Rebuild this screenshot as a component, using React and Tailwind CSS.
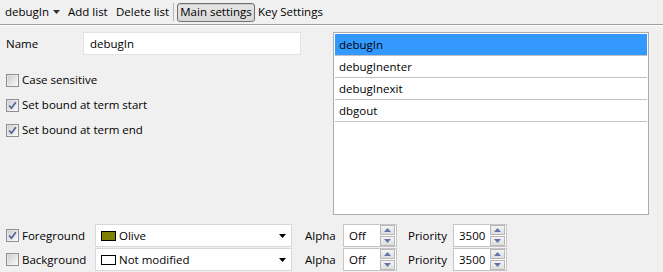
import React from "react";

const font = { fontFamily: '"Open Sans", "Liberation Sans", Arial, sans-serif' };

function Check({ checked }) {
  return (
    <div className="w-[13px] h-[13px] border border-[#8e8f8f] bg-gradient-to-br from-[#dcdcdc] to-[#fbfbfb] flex items-center justify-center shrink-0">
      <div className="w-[9px] h-[9px] bg-gradient-to-br from-[#cfcfcf] to-[#f6f6f6] flex items-center justify-center">
        {checked && (
          <svg width="9" height="9" viewBox="0 0 9 9">
            <path d="M1.2 4.6 L3.4 7.2 L7.8 1.2" fill="none" stroke="#4a5f97" strokeWidth="1.6" />
          </svg>
        )}
      </div>
    </div>
  );
}

function CheckRow({ checked, label, className = "" }) {
  return (
    <div className={"flex items-center gap-[3px] h-[16px] " + className}>
      <Check checked={checked} />
      <span className="text-[11.5px] text-black leading-none whitespace-nowrap">{label}</span>
    </div>
  );
}

function SpinBtn({ up }) {
  return (
    <div className="w-[15px] h-[10px] border border-[#b6b6b6] bg-gradient-to-b from-[#f4f4f4] to-[#dedede] flex items-center justify-center">
      <svg width="7" height="4" viewBox="0 0 7 4">
        {up ? (
          <path d="M0 4 L3.5 0 L7 4 Z" fill="#6475a8" />
        ) : (
          <path d="M0 0 L3.5 4 L7 0 Z" fill="#6475a8" />
        )}
      </svg>
    </div>
  );
}

function Spin({ value }) {
  return (
    <div className="w-[54px] h-[23px] border border-[#c6c6c6] bg-white flex items-center pl-[5px] pr-[1px]">
      <span className="flex-1 text-[11.5px] text-black">{value}</span>
      <div className="flex flex-col gap-[1px]">
        <SpinBtn up />
        <SpinBtn />
      </div>
    </div>
  );
}

function Combo({ swatch, label }) {
  return (
    <div className="w-[197px] h-[23px] border border-[#d9d9d9] bg-white flex items-center pl-[5px] pr-[5px]">
      <div className={"w-[15px] h-[10px] border border-black mr-[3px] " + swatch} />
      <span className="flex-1 text-[11.5px] text-black">{label}</span>
      <svg width="7" height="4" viewBox="0 0 7 4">
        <path d="M0 0 L7 0 L3.5 4 Z" fill="#000" />
      </svg>
    </div>
  );
}

function BottomRow({ checked, label, swatch, color, className = "" }) {
  return (
    <div className={"flex items-center h-[23px] " + className}>
      <div className="w-[95px] pl-[6px]">
        <CheckRow checked={checked} label={label} />
      </div>
      <Combo swatch={swatch} label={color} />
      <span className="text-[11.5px] text-black ml-[13px] w-[38px]">Alpha</span>
      <Spin value="Off" />
      <span className="text-[11.5px] text-black ml-[11px] w-[45px]">Priority</span>
      <Spin value="3500" />
    </div>
  );
}

export default function App() {
  const items = ["debugIn", "debugInenter", "debugInexit", "dbgout"];
  return (
    <div className="w-[663px] h-[272px] bg-[#f0f0f0] text-black overflow-hidden" style={font}>
      <div className="h-[25px] border-b border-[#a0a0a0] flex items-center text-[11.5px] whitespace-nowrap">
        <span className="ml-[5px] w-[48px] shrink-0">debugIn</span>
        <svg className="shrink-0" width="7" height="4" viewBox="0 0 7 4">
          <path d="M0 0 L7 0 L3.5 4 Z" fill="#333" />
        </svg>
        <span className="ml-[8px] w-[48px] shrink-0">Add list</span>
        <span className="w-[57px] shrink-0">Delete list</span>
        <div className="w-px h-[18px] bg-[#b5b5b5] shrink-0" />
        <div className="ml-[3px] h-[19px] w-[78px] shrink-0 border border-[#707070] rounded-[3px] bg-gradient-to-b from-[#e6e6e6] to-[#d8d8d8] flex items-center justify-center shadow-[inset_0_1px_1px_rgba(0,0,0,0.12)]">
          Main settings
        </div>
        <span className="ml-[3px]">Key Settings</span>
      </div>
      <div className="h-px bg-white" />
      <div className="flex">
        <div className="w-[333px] shrink-0">
          <div className="flex items-center mt-[6px] h-[23px]">
            <span className="ml-[6px] w-[77px] text-[11.5px]">Name</span>
            <div className="w-[218px] h-[23px] border border-[#e3e3e3] bg-white flex items-center pl-[6px] text-[11.5px]">
              debugIn
            </div>
          </div>
          <CheckRow className="ml-[6px] mt-[17px]" checked={false} label="Case sensitive" />
          <CheckRow className="ml-[6px] mt-[9px]" checked label="Set bound at term start" />
          <CheckRow className="ml-[6px] mt-[9px]" checked label="Set bound at term end" />
        </div>
        <div className="w-[316px] h-[183px] mt-[6px] border border-[#adadad] bg-white p-px">
          {items.map((it, i) => (
            <div
              key={it}
              className={
                "h-[22px] flex items-center pl-[4px] text-[11.5px] border-b border-[#c2c2c2] " +
                (i === 0 ? "bg-[#3399ff]" : "bg-white")
              }
            >
              {it}
            </div>
          ))}
        </div>
      </div>
      <BottomRow className="mt-[9px]" checked label="Foreground" swatch="bg-[#808000]" color="Olive" />
      <BottomRow className="mt-[1px]" checked={false} label="Background" swatch="bg-white" color="Not modified" />
    </div>
  );
}
